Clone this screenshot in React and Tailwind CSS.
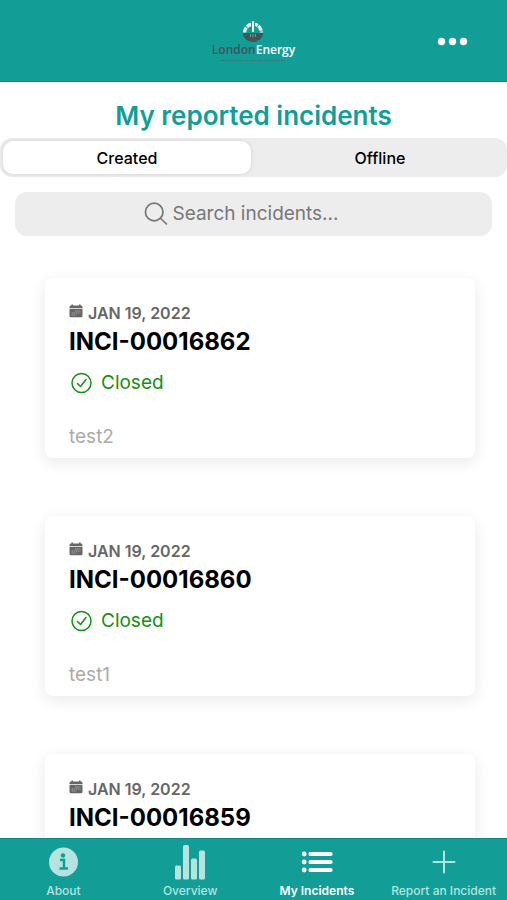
import { useState } from "react";

const incidents = [
    { id: "INCI-00016862", date: "JAN 19, 2022", status: "Closed", note: "test2" },
    { id: "INCI-00016860", date: "JAN 19, 2022", status: "Closed", note: "test1" },
    { id: "INCI-00016859", date: "JAN 19, 2022", status: "Closed", note: "test" },
];

function Logo() {
    return (
        <div className="flex flex-col items-center">
            <svg className="h-[22px] w-6" viewBox="0 0 24 22" fill="none">
                <path d="M3.600 12.500a8.400 8.400 0 0 1 16.800 0" stroke="#e9f8f6" strokeWidth="3.400" strokeDasharray="5.400 .9" />
                <path d="M1.800 13h20.400a10.200 9 0 0 1-20.400 0z" fill="#3f5558" />
                <path d="M12 1v10" stroke="#129e97" strokeWidth="4" />
                <path d="M12 2v9" stroke="#fff" strokeWidth="2" strokeLinecap="round" />
                <path d="M9.500 14v3M12 14v3.500M14.500 14v3" stroke="#6f9593" strokeWidth="1" />
            </svg>
            <p className="font-['Open_Sans','Noto_Sans',sans-serif] text-xs leading-4 font-semibold text-[#3f5558]">
                London<span className="text-white">Energy</span>
            </p>
            <svg className="h-1 w-16" viewBox="0 0 64 4">
                <path d="M0 2.500h64" stroke="#3f7775" strokeWidth="1" strokeDasharray="5 1 3 1 7 1" />
            </svg>
        </div>
    );
}

function CalendarIcon() {
    return (
        <svg className="mb-1 size-[14px]" viewBox="0 0 14 14" fill="none">
            <path d="M.5 4V3A1.500 1.500 0 0 1 2 1.500h10A1.500 1.500 0 0 1 13.500 3v1z" fill="#666" />
            <path d="M3.200 .5v2M10.800 .5v2" stroke="#666" strokeWidth="1.600" />
            <path d="M.5 4.800h13v7a1.500 1.500 0 0 1-1.500 1.500H2a1.500 1.500 0 0 1-1.500-1.500z" fill="#666" />
            <path d="M6 7h5.500M2.500 9h9M2.500 11h5" stroke="#aaa" strokeWidth=".9" strokeDasharray="1.600 .5" />
        </svg>
    );
}

function CheckIcon() {
    return (
        <svg className="size-6" viewBox="0 0 24 24" fill="none" stroke="#148f14" strokeWidth="1.500" strokeLinecap="round" strokeLinejoin="round">
            <circle cx="12.500" cy="12" r="9.500" />
            <path d="M8.500 12.500l3 3 5.500-7" />
        </svg>
    );
}

function SearchIcon() {
    return (
        <svg className="size-6" viewBox="0 0 24 24" fill="none" stroke="#777" strokeWidth="1.700" strokeLinecap="round">
            <circle cx="10.200" cy="10" r="8.800" />
            <path d="M16.700 16.500l5.800 5.500" />
        </svg>
    );
}

function InfoIcon() {
    return (
        <svg className="size-8" viewBox="0 0 32 32" fill="none">
            <circle cx="16.500" cy="16" r="14.500" fill="currentColor" />
            <circle cx="16" cy="9.500" r="2.200" fill="#129e97" />
            <path d="M13 14h4v8.500M12.500 22.500h8.500" stroke="#129e97" strokeWidth="2.400" />
        </svg>
    );
}

function BarsIcon() {
    return (
        <svg className="h-9 w-8" viewBox="0 0 32 36" fill="currentColor">
            <rect x="1" y="21.500" width="6" height="14" rx="1.500" />
            <rect x="9" y="1" width="6" height="34.500" rx="1.500" />
            <rect x="17" y="14.500" width="6" height="21" rx="1.500" />
            <rect x="25" y="6.500" width="6" height="29" rx="1.500" />
        </svg>
    );
}

function ListIcon() {
    return (
        <svg className="size-8" viewBox="0 0 32 32" fill="currentColor">
            {[8, 16, 24].map((y) => (
                <g key={y}>
                    <circle cx="3.200" cy={y} r="2.400" />
                    <rect x="7.500" y={y - 2} width="24" height="4" rx="1.800" />
                </g>
            ))}
        </svg>
    );
}

function PlusIcon() {
    return (
        <svg className="size-8" viewBox="0 0 32 32" fill="none" stroke="currentColor" strokeWidth="2" strokeLinecap="round">
            <path d="M16 5.500v21M5.500 16h21" />
        </svg>
    );
}

const navItems = [
    { label: "About", icon: InfoIcon },
    { label: "Overview", icon: BarsIcon },
    { label: "My Incidents", icon: ListIcon },
    { label: "Report an Incident", icon: PlusIcon },
];

function IncidentCard({ incident }) {
    return (
        <li className="rounded-lg bg-white px-6 pt-6 pb-1.5 shadow-[0_4px_16px_rgba(0,0,0,0.09)]">
            <p className="flex items-center gap-[5px] text-base leading-[22px] font-semibold text-[#666]">
                <CalendarIcon />
                {incident.date}
            </p>
            <h2 className="text-2xl leading-9 font-bold text-black">{incident.id}</h2>
            <p className="mt-2 flex items-center gap-2 text-[19px] leading-[30px] text-[#148f14]">
                <CheckIcon />
                {incident.status}
            </p>
            <p className="mt-6 text-[19px] leading-[30px] text-[#aaa]">{incident.note}</p>
        </li>
    );
}

export default function App() {
    const [tab, setTab] = useState("Created");
    const [page, setPage] = useState("My Incidents");
    const [query, setQuery] = useState("");

    const shown = tab === "Created" ? incidents.filter((i) => i.id.includes(query)) : [];

    return (
        <div className="flex h-screen flex-col bg-white font-[Inter,'Noto_Sans',sans-serif]">
            <header className="grid h-[82px] shrink-0 grid-cols-[1fr_auto_1fr] items-center border-b border-[#0f8b85] bg-[#129e97] px-9">
                <div className="col-start-2">
                    <Logo />
                </div>
                <button type="button" aria-label="More" className="justify-self-end">
                    <svg className="h-8 w-9" viewBox="0 0 36 32" fill="#fff">
                        <circle cx="6.500" cy="16.500" r="3.700" />
                        <circle cx="17.500" cy="16.500" r="3.700" />
                        <circle cx="28.500" cy="16.500" r="3.700" />
                    </svg>
                </button>
            </header>

            <main className="min-h-0 flex-1 overflow-y-auto [scrollbar-width:none]">
                <h1 className="pt-4 pb-1 text-center text-[26px] leading-9 font-semibold text-[#129e97]">
                    My reported incidents
                </h1>
                <div className="flex gap-[5px] rounded-xl bg-[#ededed] p-[3px]">
                    {["Created", "Offline"].map((name) => (
                        <button
                            key={name}
                            type="button"
                            aria-pressed={tab === name}
                            onClick={() => setTab(name)}
                            className={
                                tab === name
                                    ? "h-[33px] flex-1 rounded-[10px] bg-white text-base font-medium text-black shadow-[0_0_4px_rgba(0,0,0,0.12)]"
                                    : "h-[33px] flex-1 rounded-[10px] text-base font-medium text-black"
                            }
                        >
                            {name}
                        </button>
                    ))}
                </div>
                <label className="mx-[15px] mt-[15px] flex h-11 items-center justify-center gap-1 rounded-xl bg-[#ededed] pr-6">
                    <SearchIcon />
                    <input
                        type="text"
                        aria-label="Search incidents"
                        placeholder="Search incidents..."
                        value={query}
                        onChange={(e) => setQuery(e.target.value)}
                        className="field-sizing-content bg-transparent text-[19px] text-[#444] outline-none placeholder:text-[#777]"
                    />
                </label>
                <ul className="mr-8 ml-[45px] flex flex-col gap-[58px] pt-[42px] pb-10">
                    {shown.map((incident) => (
                        <IncidentCard key={incident.id} incident={incident} />
                    ))}
                </ul>
            </main>

            <nav className="grid h-[62px] shrink-0 grid-cols-4 border-t border-[#0f8b85] bg-[#129e97]">
                {navItems.map(({ label, icon: Icon }) => (
                    <button
                        key={label}
                        type="button"
                        onClick={() => setPage(label)}
                        className={
                            page === label
                                ? "flex flex-col items-center justify-end pb-px text-xs leading-4 font-semibold whitespace-nowrap text-white"
                                : "flex flex-col items-center justify-end pb-px text-xs leading-4 font-medium whitespace-nowrap text-[#b5e3df]"
                        }
                    >
                        <span className="flex h-[42px] items-center">
                            <Icon />
                        </span>
                        <span>{label}</span>
                    </button>
                ))}
            </nav>
        </div>
    );
}
